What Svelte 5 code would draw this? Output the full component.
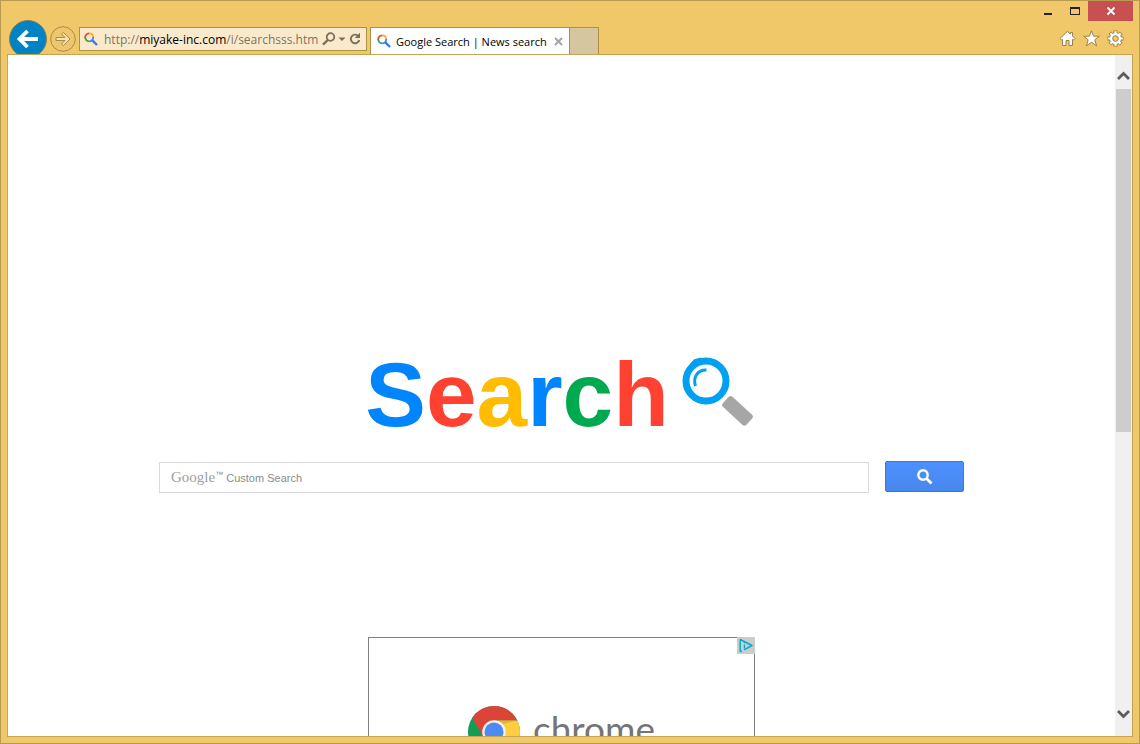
<script lang="ts">
  let url = $state("");
  let query = $state("");

  const letters = [
    { char: "S", color: "blue" },
    { char: "e", color: "red" },
    { char: "a", color: "yellow" },
    { char: "r", color: "blue" },
    { char: "c", color: "green" },
    { char: "h", color: "red" },
  ];
</script>

{#snippet favicon()}
  <svg class="favicon" viewBox="0 0 14 14" width="14" height="14" fill="none" stroke-width="1.8">
    <path d="M1.2 6A4 4 0 0 1 5.2 1.4" stroke="#ea4335" />
    <path d="M5.2 1.4A4 4 0 0 1 9.2 5" stroke="#fbab25" />
    <path d="M9.2 5A4 4 0 0 1 5.2 9.3" stroke="#4285f4" />
    <path d="M5.2 9.3A4 4 0 0 1 1.4 5.5" stroke="#34a853" />
    <path d="M8.4 8.4L13 13" stroke="#2f7df6" stroke-width="2.4" />
  </svg>
{/snippet}

<div class="window">
  <header>
    <nav class="toolbar">
      <button class="back" aria-label="Back">
        <svg viewBox="0 0 38 38" width="38" height="38">
          <circle cx="19" cy="19" r="18.5" fill="#0083c5" stroke="#8d8146" />
          <path d="M29 19H11M18.5 11L10.5 19L18.5 27" fill="none" stroke="#fff" stroke-width="3.8" />
        </svg>
      </button>
      <button class="forward" aria-label="Forward">
        <svg viewBox="0 0 26 26" width="26" height="26">
          <circle cx="13" cy="13" r="12.3" fill="#eec66c" stroke="#ab8b45" />
          <path d="M6 11.5H15L11.5 8L13.5 6.5L20 13L13.5 19.5L11.5 18L15 14.5H6Z" fill="#f8e3b4" stroke="#a98a48" />
        </svg>
      </button>
      <div class="address">
        {@render favicon()}
        <label class="url" for="url">http://<b>miyake-inc.com</b>/i/searchsss.htm</label>
        <input id="url" type="text" bind:value={url} />
        <button aria-label="Search">
          <svg viewBox="0 0 14 14" width="14" height="14" fill="none" stroke="#77705c">
            <circle cx="8.5" cy="5" r="3.8" stroke-width="1.8" />
            <path d="M5.7 8L1 12.6" stroke-width="2.4" />
          </svg>
        </button>
        <button aria-label="Show history">
          <svg viewBox="0 0 8 14" width="8" height="14"><path d="M0.5 5.5H7.5L4 9Z" fill="#77705c" /></svg>
        </button>
        <button class="refresh" aria-label="Refresh">
          <svg viewBox="0 0 14 14" width="14" height="14">
            <path d="M10.5 4.3A4.3 4.3 0 1 0 11.3 8" fill="none" stroke="#77705c" stroke-width="1.9" />
            <path d="M12 0.8V6H6.8Z" fill="#77705c" />
          </svg>
        </button>
      </div>
      <div class="tab">
        {@render favicon()}
        <span>Google Search | News search</span>
        <button aria-label="Close tab">
          <svg viewBox="0 0 9 9" width="9" height="9"><path d="M1 1L8 8M8 1L1 8" stroke="#a3a3a3" stroke-width="2" /></svg>
        </button>
      </div>
      <button class="new-tab" aria-label="New tab"></button>
    </nav>

    <div class="controls">
      <div class="caption">
        <button aria-label="Minimize">
          <svg viewBox="0 0 12 12" width="12" height="12"><path d="M2 8H10V10H2Z" fill="#222" /></svg>
        </button>
        <button aria-label="Maximize">
          <svg viewBox="0 0 12 12" width="12" height="12"><path d="M1 2H11V10H1ZM2 4V9H10V4Z" fill="#222" fill-rule="evenodd" /></svg>
        </button>
        <button class="close" aria-label="Close">
          <svg viewBox="0 0 12 12" width="12" height="12"><path d="M2.5 2.5L9.5 9.5M9.5 2.5L2.5 9.5" stroke="#fff" stroke-width="1.8" /></svg>
        </button>
      </div>
      <div class="icons">
        <button aria-label="Home">
          <svg viewBox="0 0 17 17" width="17" height="17" fill="#fff" stroke="#9b8048">
            <path d="M8.5 1.2L1 8.5L2.5 10L3.5 9.3V15.5H7V10.5H10V15.5H13.5V9.3L14.5 10L16 8.5L13.5 6V2.5H11.5V4.2Z" />
          </svg>
        </button>
        <button aria-label="Favorites">
          <svg viewBox="0 0 17 17" width="17" height="17" fill="#fff" stroke="#9b8048">
            <path d="M8.5 0.8L10.6 6.2H16.3L11.8 9.8L13.5 15.8L8.5 12.3L3.5 15.8L5.2 9.8L0.7 6.2H6.4Z" />
          </svg>
        </button>
        <button aria-label="Tools">
          <svg viewBox="0 0 17 17" width="17" height="17" fill="none">
            <g stroke="#9b8048" stroke-width="4">
              <path d="M8.5 0.5V16.5M0.5 8.5H16.5M2.8 2.8L14.2 14.2M14.2 2.8L2.8 14.2" />
            </g>
            <circle cx="8.5" cy="8.5" r="6.3" fill="#9b8048" />
            <g stroke="#fff" stroke-width="2.2">
              <path d="M8.5 1.2V15.8M1.2 8.5H15.8M3.4 3.4L13.6 13.6M13.6 3.4L3.4 13.6" />
            </g>
            <circle cx="8.5" cy="8.5" r="5.5" fill="#fff" />
            <circle cx="8.5" cy="8.5" r="2.8" fill="#f0c869" stroke="#9b8048" />
          </svg>
        </button>
      </div>
    </div>
  </header>

  <div class="viewport">
    <main>
      <h1 class="logo">
        <span class="word">{#each letters as letter}<span class={letter.color}>{letter.char}</span>{/each}</span>
        <svg viewBox="0 -3 78 80" width="78" height="80" fill="none">
          <circle cx="26" cy="26" r="20" stroke="#00a1f1" stroke-width="7" />
          <path d="M11 10L15 5.5L21 4" stroke="#00a1f1" stroke-width="3" />
          <path d="M15.5 31C12.5 22 18 14.5 26.5 15" stroke="#00a1f1" stroke-width="3" />
          <rect x="-3" y="-7" width="32" height="14" rx="3" fill="#a6a6a6" transform="translate(48 47) rotate(43)" />
        </svg>
      </h1>

      <form class="search" onsubmit={(e) => e.preventDefault()}>
        <div class="field">
          <label for="query"><span class="google">Google</span><sup>™</sup> Custom Search</label>
          <input id="query" type="text" bind:value={query} />
        </div>
        <button aria-label="Search">
          <svg viewBox="0 0 16 16" width="16" height="16" fill="none" stroke="#fff">
            <circle cx="6" cy="6" r="4.7" stroke-width="2.4" />
            <path d="M9.3 9.3L14.5 14.5" stroke-width="2.8" />
          </svg>
        </button>
      </form>

      <section class="ad">
        <button class="adchoices" aria-label="AdChoices">
          <svg viewBox="0 0 18 17" width="18" height="17" fill="none" stroke="#00aecd">
            <path d="M5 14.2L3.2 14.5V2.5L15 8.5L7 12.8" stroke-width="1.5" stroke-linejoin="round" />
            <path d="M7.5 7.5V11.5M7.5 5V6.3" stroke-width="1.3" />
          </svg>
        </button>
        <div class="brand">
          <svg viewBox="0 0 52 52" width="52" height="52">
            <circle cx="26" cy="26" r="26" fill="#0f9d58" />
            <path d="M26 14.5H49.3A26 26 0 0 1 26 52L36 32Z" fill="#ffcd40" />
            <path d="M4.3 11.7A26 26 0 0 1 49.3 14.5H26L15.5 31.5Z" fill="#db4437" />
            <path d="M30 14.5H49L35 18Z" fill="#e2b53a" />
            <circle cx="26" cy="26" r="11.8" fill="#f1f1f1" />
            <circle cx="26" cy="26" r="9.5" fill="#4c8bf5" />
          </svg>
          <span>chrome</span>
        </div>
      </section>
    </main>

    <div class="scrollbar">
      <button aria-label="Scroll up">
        <svg viewBox="0 0 13 10" width="13" height="10"><path d="M1 8L6.5 2.5L12 8" fill="none" stroke="#5c5c5c" stroke-width="2.8" /></svg>
      </button>
      <div class="track"><div class="thumb"></div></div>
      <button aria-label="Scroll down">
        <svg viewBox="0 0 13 10" width="13" height="10"><path d="M1 2L6.5 7.5L12 2" fill="none" stroke="#5c5c5c" stroke-width="2.8" /></svg>
      </button>
    </div>
  </div>
</div>

<style>
  :global(body) {
    margin: 0;
  }

  .window {
    box-sizing: border-box;
    display: flex;
    flex-direction: column;
    height: 100vh;
    padding: 0 6px 6px;
    border: 1px solid #b89a50;
    background: #f0c869;
    font-family: "Open Sans", "Noto Sans", sans-serif;
    font-size: 12px;
    color: #000;
  }

  button {
    display: flex;
    align-items: center;
    justify-content: center;
    padding: 0;
    border: 0;
    background: none;
  }

  input {
    flex: 1;
    min-width: 0;
    padding: 0;
    border: 0;
    outline: 0;
    background: none;
    font: inherit;
  }

  svg {
    display: block;
    flex: none;
  }

  header {
    display: flex;
    justify-content: space-between;
    height: 53px;
    overflow: hidden;
  }

  .toolbar {
    display: flex;
    align-items: flex-start;
    padding: 19px 0 0 2px;
  }

  .forward {
    margin: 6px 3px 0;
  }

  .address {
    box-sizing: border-box;
    display: flex;
    align-items: center;
    width: 288px;
    height: 24px;
    margin: 7px 3px 0 0;
    padding: 0 4px;
    border: 1px solid #b09048;
    background: #faeacb;
    gap: 2px;
  }

  .url {
    margin-left: 4px;
    color: #7d7562;
    white-space: nowrap;
  }

  .url b {
    font-weight: 400;
    color: #000;
  }

  .address input {
    flex: 1 1 0;
    width: 0;
    margin-left: -2px;
  }

  .tab {
    box-sizing: border-box;
    display: flex;
    align-items: center;
    width: 200px;
    height: 27px;
    margin-top: 7px;
    padding: 0 6px;
    border: 1px solid #b09048;
    border-bottom: 0;
    background: #fff;
    gap: 5px;
  }

  .tab span {
    flex: 1;
    font-size: 11px;
    white-space: nowrap;
  }

  .new-tab {
    width: 29px;
    height: 27px;
    margin-top: 7px;
    border: 1px solid #b09048;
    border-width: 1px 1px 0 0;
    background: #d5c69f;
  }

  .controls {
    display: flex;
    flex-direction: column;
    gap: 8px;
  }

  .caption {
    display: flex;
    justify-content: flex-end;
  }

  .caption button {
    width: 27px;
    height: 20px;
  }

  .caption .close {
    width: 45px;
    background: #c75050;
  }

  .icons {
    display: flex;
    justify-content: flex-end;
    padding-right: 6px;
  }

  .icons button {
    width: 24px;
    height: 18px;
  }

  .viewport {
    flex: 1;
    display: flex;
    min-height: 0;
    border: 1px solid #c5a352;
    background: #fff;
  }

  main {
    flex: 1;
    display: flex;
    flex-direction: column;
    align-items: center;
    overflow: hidden;
  }

  .logo {
    display: flex;
    align-items: flex-start;
    margin: 297px 0 0;
    gap: 11px;
    font-family: "Liberation Sans", Arial, sans-serif;
    font-size: 91px;
    line-height: 86px;
  }

  .blue {
    color: #0085ff;
  }

  .red {
    color: #ff4131;
  }

  .yellow {
    color: #ffbc00;
  }

  .green {
    color: #00a84f;
  }

  .search {
    display: flex;
    gap: 16px;
    box-sizing: border-box;
    width: 100%;
    max-width: 805px;
    margin-top: 23px;
  }

  .field {
    box-sizing: border-box;
    flex: 1;
    display: flex;
    align-items: center;
    height: 31px;
    margin-top: 1px;
    padding: 0 11px;
    border: 1px solid #d9d9d9;
  }

  .field label {
    font-family: "Liberation Sans", Arial, sans-serif;
    font-size: 11px;
    color: #8c8c8c;
    white-space: nowrap;
  }

  .google {
    font-family: "Liberation Serif", serif;
    font-size: 15px;
    color: #a0a0a0;
  }

  .field sup {
    font-size: 8px;
    line-height: 0;
  }

  .search button {
    width: 79px;
    height: 31px;
    border: 1px solid #3079ed;
    border-radius: 2px;
    background: linear-gradient(#4d90fe, #4787ed);
  }

  .ad {
    box-sizing: border-box;
    flex: none;
    display: flex;
    flex-direction: column;
    width: 387px;
    height: 280px;
    margin-top: 144px;
    border: 1px solid #808080;
  }

  .adchoices {
    align-self: flex-end;
    margin: -1px -1px 0 0;
    background: #ccc;
  }

  .brand {
    display: flex;
    justify-content: center;
    align-items: flex-start;
    margin-top: 52px;
    gap: 13px;
    font-family: Lato, sans-serif;
    font-size: 37px;
    line-height: 46px;
    color: #757575;
  }

  .scrollbar {
    display: flex;
    flex-direction: column;
    width: 17px;
    background: #f0f0f0;
  }

  .scrollbar button {
    height: 34px;
    padding-top: 8px;
  }

  .scrollbar button:last-child {
    padding: 0 0 10px;
  }

  .track {
    flex: 1;
    padding: 0 1px;
  }

  .thumb {
    height: 56%;
    background: #cdcdcd;
  }
</style>
